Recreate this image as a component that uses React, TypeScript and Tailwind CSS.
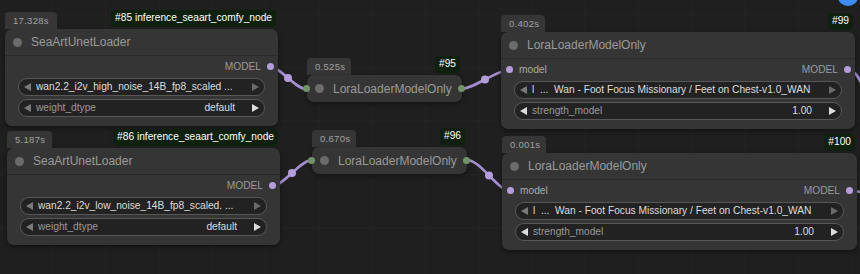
import React from "react";

type Widget =
  | { kind: "combo"; text: string }
  | { kind: "value"; label: string; value: string; leftBright: boolean };

function Tri({ dir, color }: { dir: "l" | "r"; color: string }) {
  return (
    <svg width="7" height="8" viewBox="0 0 7 8" className="shrink-0">
      <path d={dir === "l" ? "M7 0 L0 4 L7 8 Z" : "M0 0 L7 4 L0 8 Z"} fill={color} />
    </svg>
  );
}

function WidgetRow({ w }: { w: Widget }) {
  if (w.kind === "combo") {
    return (
      <div className="mx-[13px] h-[18px] rounded-full border border-[#575757] bg-[#222222] flex items-center px-[5px]">
        <Tri dir="l" color="#7a7a7a" />
        <span className="ml-[5px] flex-1 truncate whitespace-pre text-[10.2px] leading-none text-[#dddddd]">{w.text}</span>
        <span className="ml-[8px]">
          <Tri dir="r" color="#6a6a6a" />
        </span>
      </div>
    );
  }
  return (
    <div className="mx-[13px] h-[18px] rounded-full border border-[#575757] bg-[#222222] flex items-center px-[5px]">
      <Tri dir="l" color={w.leftBright ? "#dddddd" : "#7a7a7a"} />
      <span className="ml-[5px] flex-1 text-[10.2px] leading-none text-[#999999]">{w.label}</span>
      <span className="mr-[17px] text-[10.2px] leading-none text-[#dddddd]">{w.value}</span>
      <Tri dir="r" color="#dddddd" />
    </div>
  );
}

function Header({ time, id, timeW }: { time: string; id: string; timeW: string }) {
  return (
    <div className="h-[19px] flex items-end justify-between">
      <div
        className={`${timeW} h-[17px] rounded-t-[4px] bg-[#363636] flex items-center pl-[8px] text-[9.5px] tracking-[0.3px] text-[#a0a0a0] leading-none`}
      >
        {time}
      </div>
      <div className="h-[17px] mb-[2px] mr-[2px] rounded-[4px] bg-[#0f200f] px-[4px] flex items-center text-[10.2px] leading-none text-white">
        {id}
      </div>
    </div>
  );
}

function TitleRow({ title }: { title: string }) {
  return (
    <div className="h-[26px] flex items-center pl-[8px] gap-[9px]">
      <div className="w-[9px] h-[9px] rounded-full bg-[#6b6b6b]" />
      <span className="text-[12px] leading-none text-[#9a9a9a] whitespace-nowrap">{title}</span>
    </div>
  );
}

function FullNode({
  x,
  y,
  w,
  time,
  timeW,
  id,
  title,
  input,
  widgets,
}: {
  x: number;
  y: number;
  w: number;
  time: string;
  timeW: string;
  id: string;
  title: string;
  input?: string;
  widgets: Widget[];
}) {
  return (
    <div className="absolute" style={{ left: x, top: y, width: w }}>
      <Header time={time} id={id} timeW={timeW} />
      <div className="rounded-[7px] bg-[#353535] shadow-[0_2px_5px_rgba(0,0,0,0.45)] pb-[9px]">
        <TitleRow title={title} />
        <div className="h-px bg-[#2b2b2b]" />
        <div className="h-[22px] flex items-center justify-between pl-[5px] pr-[4px]">
          <div className="flex items-center gap-[6px]">
            {input ? (
              <>
                <div className="w-[7px] h-[7px] rounded-full bg-[#b39ddb]" />
                <span className="text-[10.2px] leading-none text-[#aaaaaa]">{input}</span>
              </>
            ) : null}
          </div>
          <div className="flex items-center gap-[6px]">
            <span className="text-[10.2px] leading-none text-[#9a9a9a]">MODEL</span>
            <div className="w-[7px] h-[7px] rounded-full bg-[#b39ddb]" />
          </div>
        </div>
        <div className="flex flex-col gap-[3px]">
          {widgets.map((wd, i) => (
            <WidgetRow key={i} w={wd} />
          ))}
        </div>
      </div>
    </div>
  );
}

function CollapsedNode({ x, y, time, id }: { x: number; y: number; time: string; id: string }) {
  return (
    <div className="absolute w-[155px]" style={{ left: x, top: y }}>
      <Header time={time} id={id} timeW="w-[44px]" />
      <div className="relative h-[27px] rounded-[7px] bg-[#353535] shadow-[0_2px_5px_rgba(0,0,0,0.45)] flex items-center pl-[8px] gap-[9px]">
        <div className="w-[9px] h-[9px] rounded-full bg-[#6b6b6b]" />
        <span className="text-[12px] leading-none text-[#9a9a9a] whitespace-nowrap">LoraLoaderModelOnly</span>
        <div className="absolute left-[-4.5px] top-[10px] w-[7px] h-[7px] rounded-full bg-[#6f9566]" />
        <div className="absolute right-[-2.5px] top-[10px] w-[7px] h-[7px] rounded-full bg-[#6f9566]" />
      </div>
    </div>
  );
}

export default function App() {
  const edge = "#a58fd3";
  const dot = "#b39ddb";
  return (
    <div
      className="relative w-[860px] h-[274px] overflow-hidden bg-[#1f1f1f]"
      style={{ fontFamily: '"Liberation Sans", Arial, sans-serif' }}
    >
      <svg className="absolute inset-0" width="860" height="274">
        <defs>
          <pattern id="g" width="53.3" height="53.3" patternUnits="userSpaceOnUse" x="-1.5" y="14">
            <path d="M0 0 H53.3 M0 0 V53.3" stroke="#272727" strokeWidth="1" fill="none" />
          </pattern>
        </defs>
        <rect width="860" height="274" fill="url(#g)" />
        <ellipse cx="848" cy="-3" rx="10" ry="9" fill="#3b8ef0" />
        <g stroke={edge} strokeWidth="2.6" fill="none" strokeLinecap="round">
          <path d="M270 67 C280.5 67 295.5 89 306 89" />
          <path d="M461 89 C473.9 89 496.1 70 509 70" />
          <path d="M272 186 C283.9 186 300.1 160 312 160" />
          <path d="M467 160 C480.5 160 497.5 191 511 191" />
          <path d="M848 70 C856 70 859 79 866 92" />
          <path d="M849 191 L864 192" />
        </g>
        <g fill={dot}>
          <circle cx="288" cy="78" r="4" />
          <circle cx="485" cy="79.5" r="4" />
          <circle cx="292" cy="173" r="4" />
          <circle cx="489" cy="175.5" r="4" />
        </g>
      </svg>

      <FullNode
        x={5}
        y={10}
        w={273}
        time="17.328s"
        timeW="w-[52px]"
        id="#85 inference_seaart_comfy_node"
        title="SeaArtUnetLoader"
        widgets={[
          { kind: "combo", text: "wan2.2_i2v_high_noise_14B_fp8_scaled ..." },
          { kind: "value", label: "weight_dtype", value: "default", leftBright: false },
        ]}
      />
      <FullNode
        x={7}
        y={129}
        w={273}
        time="5.187s"
        timeW="w-[45px]"
        id="#86 inference_seaart_comfy_node"
        title="SeaArtUnetLoader"
        widgets={[
          { kind: "combo", text: "wan2.2_i2v_low_noise_14B_fp8_scaled. ..." },
          { kind: "value", label: "weight_dtype", value: "default", leftBright: false },
        ]}
      />
      <CollapsedNode x={307} y={56} time="0.525s" id="#95" />
      <CollapsedNode x={312} y={128} time="0.670s" id="#96" />
      <FullNode
        x={501}
        y={13}
        w={354}
        time="0.402s"
        timeW="w-[44px]"
        id="#99"
        title="LoraLoaderModelOnly"
        input="model"
        widgets={[
          { kind: "combo", text: "l  ...  Wan - Foot Focus Missionary / Feet on Chest-v1.0_WAN" },
          { kind: "value", label: "strength_model", value: "1.00", leftBright: true },
        ]}
      />
      <FullNode
        x={502}
        y={134}
        w={355}
        time="0.001s"
        timeW="w-[44px]"
        id="#100"
        title="LoraLoaderModelOnly"
        input="model"
        widgets={[
          { kind: "combo", text: "l  ...  Wan - Foot Focus Missionary / Feet on Chest-v1.0_WAN" },
          { kind: "value", label: "strength_model", value: "1.00", leftBright: true },
        ]}
      />
    </div>
  );
}
